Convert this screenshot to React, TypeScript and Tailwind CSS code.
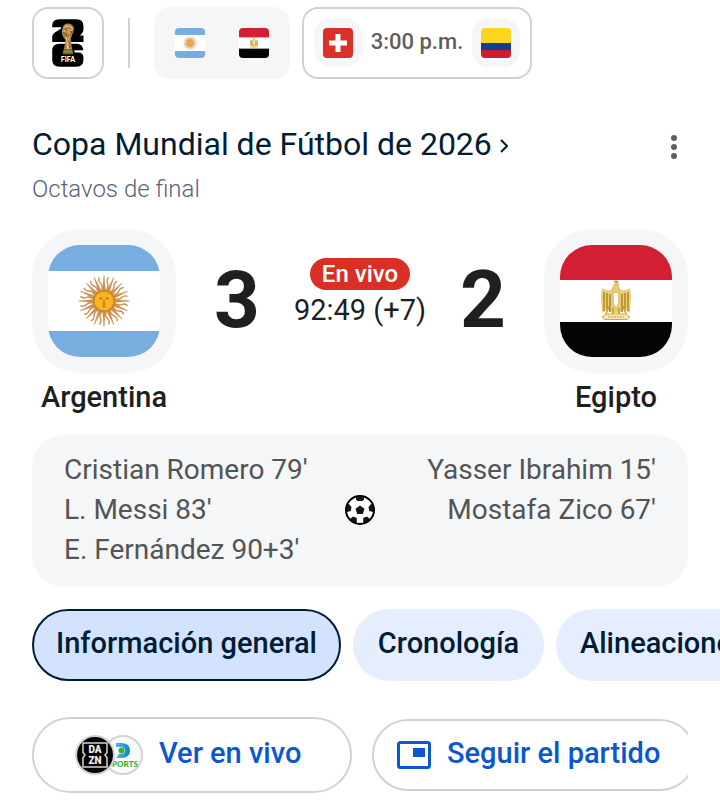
import type { ReactNode } from "react";

function ArgentinaFlag({ label }: { label: string }) {
  const rays = Array.from({ length: 32 }, (_, i) => i * 11.25);
  return (
    <svg viewBox="0 0 112 112" className="block size-full" role="img" aria-label={label}>
      <rect width="112" height="112" fill="#fff" />
      <rect width="112" height="26" fill="#78addf" />
      <rect y="86" width="112" height="26" fill="#78addf" />
      <g transform="translate(56 56)">
        {rays.map((angle, i) => (
          <path
            key={angle}
            d={i % 2 ? "M0-11 Q2-15 0-18 T0-24" : "M-1.4-10 L0-25.5 L1.4-10Z"}
            transform={`rotate(${angle})`}
            fill={i % 2 ? "none" : "#c98b4b"}
            stroke="#c98b4b"
            strokeWidth={i % 2 ? 1.3 : 0.5}
          />
        ))}
        <circle r="10.3" fill="#fbb51c" stroke="#c9822c" strokeWidth="1.6" />
        <path d="M-5-2.5h3.500M1.500-2.500H5M0-1v3M-1.500 3h3M-1.500 5.500h3" stroke="#b9761b" strokeWidth="1.300" fill="none" />
      </g>
    </svg>
  );
}

function EgyptFlag({ label }: { label: string }) {
  return (
    <svg viewBox="0 0 112 112" className="block size-full" role="img" aria-label={label}>
      <rect width="112" height="112" fill="#fff" />
      <rect width="112" height="35" fill="#d21f34" />
      <rect y="77" width="112" height="35" fill="#050505" />
      <path d="M53 44 C48 47 44 44 42 43 L41 51 L42 68 L47 65 L53 68 L59 68 L65 65 L70 68 L71 51 L70 43 C68 44 64 47 59 44Z" fill="#e6cf82" />
      <path d="M44 47V66M47 48V64M50 49V67M62 49V67M65 48V64M68 47V66" stroke="#bd9022" strokeWidth="1.7" />
      <path d="M53 41 Q56 35 59 38 L59 42 L61 45 V59 L56 66 L51 59 V45Z" fill="#e2c67a" />
      <path d="M54 48h4v11l-2 3-2-3z" fill="#fff" />
      <path d="M54 36.500h4" stroke="#dc7444" strokeWidth="1.6" />
      <path d="M49 61 L46 69 M63 61 L66 69 M53 63V69M59 63V69" stroke="#c9a037" strokeWidth="1.6" />
      <path d="M46 69h20l4 3-3 2.5H45l-3-2.5z" fill="#f4e5b5" stroke="#d0aa49" strokeWidth="1" />
      <path d="M48 72h16" stroke="#c9a037" strokeWidth="1" strokeDasharray="2 1" />
    </svg>
  );
}

function SwissFlag() {
  return (
    <svg viewBox="0 0 30 30" className="block size-full" role="img" aria-label="Suiza">
      <rect width="30" height="30" fill="#d93028" />
      <path d="M12.500 6h5v6.500H24v5h-6.500V24h-5v-6.500H6v-5h6.500z" fill="#fff" />
    </svg>
  );
}

function ColombiaFlag() {
  return (
    <svg viewBox="0 0 30 30" className="block size-full" role="img" aria-label="Colombia">
      <rect width="30" height="30" fill="#fdd51f" />
      <rect y="15" width="30" height="8" fill="#0e3f93" />
      <rect y="22" width="30" height="8" fill="#ce1c32" />
    </svg>
  );
}

function WorldCupEmblem() {
  return (
    <svg viewBox="0 0 96 146" className="h-12 w-8" aria-hidden="true">
      <path d="M22 1H74Q95 1 95 22V32Q95 42 84 50H95V70H0V55Q0 45 14 37L28 28Q26 23 20 25H0V20Q0 1 22 1Z" fill="#000" />
      <path d="M22 75H74Q93 75 95 95H70Q67 95 67 99Q67 102 71 102H76Q95 101 95 118V124Q95 145 74 145H22Q0 145 0 124V96Q0 75 22 75Z" fill="#000" />
      <path d="M32 25 Q35 14 49 14 Q63 15 66 28 Q67 38 61 47 L57 60 L59 83 L64 107 H32 L37 84 L41 65 Q29 51 29 37Z" fill="#b08443" />
      <path d="M36 25Q49 16 62 29Q57 40 48 31M34 37Q48 32 56 48L49 63M43 53L47 91M56 42L50 94" fill="none" stroke="#f1d28b" strokeWidth="3" />
      <path d="M33 42Q44 43 44 54M61 35Q53 48 54 62L53 88M39 29L45 38" fill="none" stroke="#60431d" strokeWidth="2.5" />
      <path d="M35 94H61M33 104H64" stroke="#42683a" strokeWidth="4" />
      <text x="48" y="132" textAnchor="middle" fill="#fff" fontFamily="Lato, sans-serif" fontSize="21" fontWeight="900">FIFA</text>
    </svg>
  );
}

function SoccerBall() {
  return (
    <svg viewBox="0 0 30 30" className="size-[30px]" role="img" aria-label="Goles">
      <defs>
        <clipPath id="ball">
          <circle cx="15" cy="15" r="14" />
        </clipPath>
      </defs>
      <circle cx="15" cy="15" r="14" fill="#fff" />
      <g clipPath="url(#ball)" fill="#161616">
        <path d="M15 10.500l4.500 3.300-1.700 5.300h-5.600l-1.700-5.300z" />
        <path d="M11 0h8v4.500L17.500 6h-5L11 4.500zM0 10l4-1 2.500 3-.7 4L0 17.500zM30 10l-4-1-2.500 3 .7 4 5.800 1.500zM5 24l3-2.500 3.800 1.500v4.500l-3 2.500zM25 24l-3-2.500-3.800 1.500v4.500l3 2.500z" />
      </g>
      <circle cx="15" cy="15" r="14" fill="none" stroke="#000" strokeWidth="2" />
    </svg>
  );
}

function DaznLogo() {
  return (
    <svg viewBox="0 0 40 40" className="relative size-10" aria-hidden="true">
      <circle cx="20" cy="20" r="19" fill="#050505" stroke="#d0d2d5" strokeWidth="2" />
      <path d="M8 8H32V17.500L30 20L32 22.500V32H8V22.500L10 20L8 17.500Z" fill="none" stroke="#d4d4d4" strokeWidth="1.5" />
      <g fill="#eee" fontFamily="Roboto, sans-serif" fontSize="10" fontWeight="900" textAnchor="middle">
        <text x="20" y="18">DA</text>
        <text x="20" y="29">ZN</text>
      </g>
    </svg>
  );
}

function DSportsLogo() {
  return (
    <svg viewBox="0 0 40 40" className="-ml-3 size-10" aria-hidden="true">
      <defs>
        <linearGradient id="dsports" x1="0" x2="1">
          <stop stopColor="#48bde8" />
          <stop offset="1" stopColor="#147fc5" />
        </linearGradient>
      </defs>
      <circle cx="20" cy="20" r="19" fill="#f8f9fa" stroke="#d0d2d5" strokeWidth="2" />
      <path d="M13 8H18Q27 8 27 15.500T18 23H13L16 19H18Q22 19 22 15.500T18 12H13Z" fill="url(#dsports)" />
      <circle cx="18.500" cy="15.500" r="3" fill="#3bae34" />
      <text x="22" y="32" textAnchor="middle" fill="#3bae34" fontFamily="Lato, sans-serif" fontSize="8" fontWeight="900">PORTS</text>
    </svg>
  );
}

function SmallFlag({ children }: { children: ReactNode }) {
  return (
    <span className="flex size-12 shrink-0 items-center justify-center rounded-2xl bg-[#f4f6f8]">
      <span className="size-[30px] overflow-hidden rounded-sm">{children}</span>
    </span>
  );
}

function Team({ name, children }: { name: string; children: ReactNode }) {
  return (
    <div className="flex w-36 shrink-0 flex-col items-center">
      <div className="size-36 rounded-[48px] bg-[#f4f6f8] p-4">
        <div className="size-28 overflow-hidden rounded-[32px]">{children}</div>
      </div>
      <h2 className="mt-1 text-[29px] leading-10 font-medium">{name}</h2>
    </div>
  );
}

const tab = "h-[72px] shrink-0 rounded-full pb-0.5 text-[29px] font-medium text-[#001d35]";

export default function App() {
  return (
    <main className="overflow-hidden bg-white pt-[7px] pb-2 font-[Roboto,sans-serif] text-[#1f1f1f]">
      <nav className="flex items-center px-8" aria-label="Partidos">
        <button aria-label="Copa Mundial FIFA" className="flex size-[72px] items-center justify-center rounded-2xl border-2 border-[#d2d2d2]">
          <WorldCupEmblem />
        </button>
        <span className="mx-6 h-[50px] w-0.5 bg-[#d2d2d2]" />
        <button className="flex h-[72px] items-center gap-4 rounded-2xl bg-[#f4f6f8] px-3">
          <SmallFlag><ArgentinaFlag label="Argentina" /></SmallFlag>
          <SmallFlag><EgyptFlag label="Egipto" /></SmallFlag>
        </button>
        <button className="ml-3 flex h-[72px] w-[230px] items-center justify-between rounded-2xl border-2 border-[#d2d2d2] px-2.5">
          <SmallFlag><SwissFlag /></SmallFlag>
          <span className="pb-1 text-[22px] font-medium whitespace-nowrap text-[#5e5e5e]">3:00 p.m.</span>
          <SmallFlag><ColombiaFlag /></SmallFlag>
        </button>
      </nav>

      <header className="mt-[45px] flex items-start justify-between px-8">
        <div>
          <h1 className="text-[32px] leading-10 text-[#001d35]">
            <a href="#torneo" className="flex items-center gap-2">
              Copa Mundial de Fútbol de 2026
              <svg viewBox="0 0 8 14" className="mt-1 h-3.5 w-2" aria-hidden="true">
                <path d="M1 1l6 6-6 6" fill="none" stroke="#001d35" strokeWidth="2" />
              </svg>
            </a>
          </h1>
          <p className="mt-[9px] text-2xl leading-8 font-light text-[#5b5f7b]">Octavos de final</p>
        </div>
        <button aria-label="Más opciones" className="flex h-[46px] w-7 items-center justify-center">
          <svg viewBox="0 0 6 24" className="h-6 w-1.5" fill="#5e5e5e" aria-hidden="true">
            <circle cx="3" cy="3" r="3" />
            <circle cx="3" cy="12" r="3" />
            <circle cx="3" cy="21" r="3" />
          </svg>
        </button>
      </header>

      <section className="mt-6 flex items-start justify-between px-8">
        <Team name="Argentina"><ArgentinaFlag label="Bandera de Argentina" /></Team>
        <div className="flex h-36 grow items-center justify-between px-[38px] pb-0.5">
          <span className="text-[80px] leading-none font-bold">3</span>
          <div className="flex flex-col items-center pb-3">
            <span className="h-8 rounded-full bg-[#d93025] px-3 text-2xl leading-8 font-medium whitespace-nowrap text-white">En vivo</span>
            <span className="text-[29px] leading-10 whitespace-nowrap">92:49 (+7)</span>
          </div>
          <span className="text-[80px] leading-none font-bold">2</span>
        </div>
        <Team name="Egipto"><EgyptFlag label="Bandera de Egipto" /></Team>
      </section>

      <section className="mx-8 mt-[18px] grid grid-cols-[1fr_30px_1fr] items-center rounded-[32px] bg-[#f4f6f8] px-8 pt-[15px] pb-[17px] text-[28px] leading-10 text-[#545454]">
        <ul className="whitespace-nowrap">
          <li>Cristian Romero 79'</li>
          <li>L. Messi 83'</li>
          <li>E. Fernández 90+3'</li>
        </ul>
        <SoccerBall />
        <ul className="self-start text-right whitespace-nowrap">
          <li>Yasser Ibrahim 15'</li>
          <li>Mostafa Zico 67'</li>
        </ul>
      </section>

      <div role="tablist" aria-label="Secciones" className="mt-[22px] flex gap-3 overflow-x-auto pl-8 [scrollbar-width:none]">
        <button role="tab" aria-selected="true" className={`${tab} min-w-[309px] border-2 border-[#001d35] bg-[#d3e3fd] px-5`}>Información general</button>
        <button role="tab" aria-selected="false" className={`${tab} min-w-[191px] bg-[#e5edff] px-5`}>Cronología</button>
        <button role="tab" aria-selected="false" className={`${tab} bg-[#e5edff] px-6`}>Alineaciones</button>
      </div>

      <div className="mx-8 mt-9 flex items-center gap-5 overflow-x-auto text-[29px] font-medium text-[#0b57d0] [scrollbar-width:none]">
        <button className="flex h-[76px] w-80 shrink-0 items-center gap-4 rounded-full border-2 border-[#d2d2d2] pl-[41px] whitespace-nowrap">
          <span className="flex"><DaznLogo /><DSportsLogo /></span>
          <span className="pb-0.5">Ver en vivo</span>
        </button>
        <button className="flex h-[72px] min-w-[324px] shrink-0 items-center gap-4 rounded-full border-2 border-[#d2d2d2] px-[23px] whitespace-nowrap">
          <svg viewBox="0 0 34 28" className="h-7 w-[34px]" aria-hidden="true">
            <rect x="1.500" y="1.500" width="31" height="25" rx="2" fill="none" stroke="#0b57d0" strokeWidth="3" />
            <rect x="16" y="7" width="12" height="9" fill="#0b57d0" />
          </svg>
          <span className="pb-0.5">Seguir el partido</span>
        </button>
      </div>
    </main>
  );
}
